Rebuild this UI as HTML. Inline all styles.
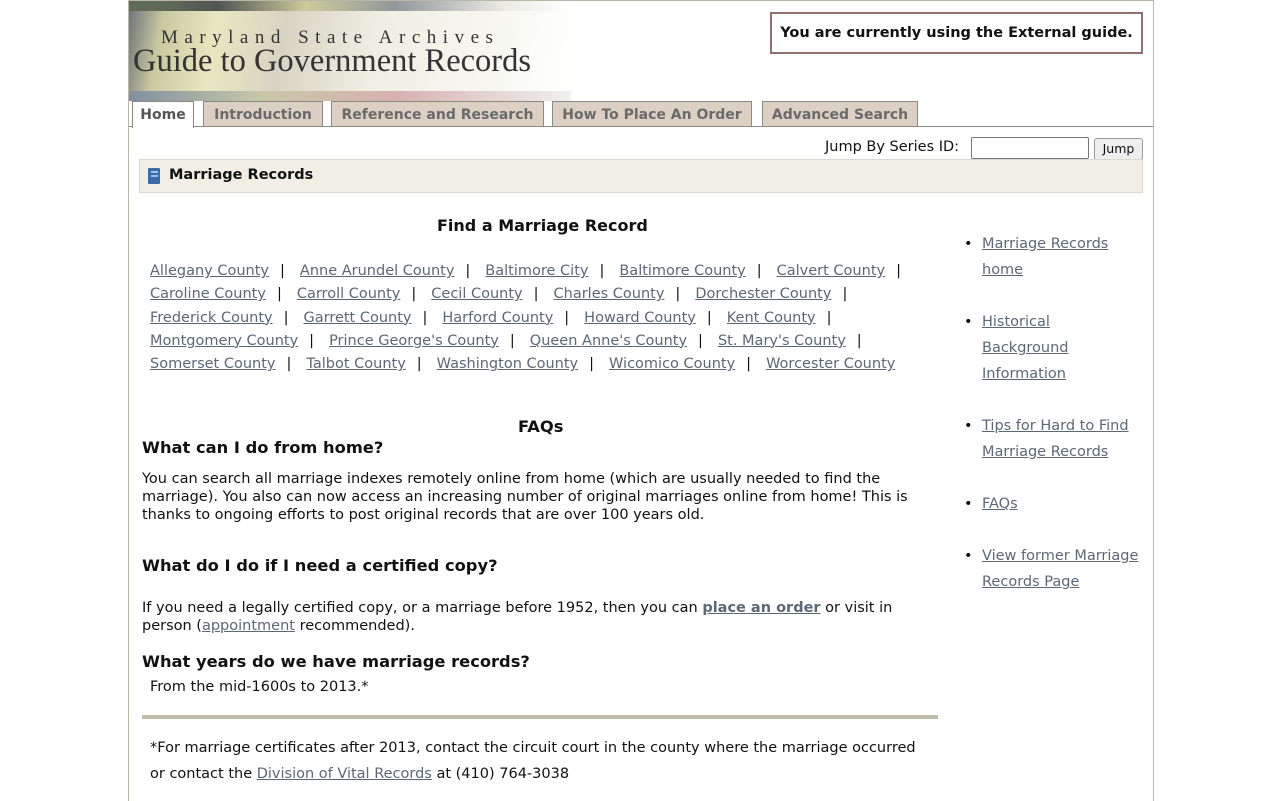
<!DOCTYPE html>
<html><head><meta charset="utf-8"><style>
body{margin:0;background:#fff;font-family:"DejaVu Sans","Liberation Sans",sans-serif;font-size:14.5px;color:#111;}
#page{position:absolute;left:128px;top:0;width:1024px;height:800px;border-left:1px solid #b8b8a8;border-right:1px solid #b8b8a8;border-top:1px solid #b8b8a8;overflow:hidden;}
.abs{position:absolute;white-space:nowrap;}
a{color:#5b6876;text-decoration:underline;}
#hdr{position:absolute;left:0;top:0;width:442px;height:100px;background:linear-gradient(100deg,#6a7078 0%,#c9c9a0 8%,#e9e6c0 20%,#d8d4c4 35%,#efeee2 55%,#f7f7f0 80%,#fff 100%);}
.tab{position:absolute;top:100px;height:24px;background:#dcd0c4;border:1px solid #8c8a80;border-bottom:none;font-weight:bold;color:#6a6a6a;font-size:14px;line-height:27px;text-align:center;}
.p{display:inline-block;margin:0 15px 0 11px}
</style></head><body>
<div id="page">
<div id="hdr">
 <div style="position:absolute;left:0;top:0;width:442px;height:10px;background:linear-gradient(90deg,#5a6a50,#2a3038 20%,#c8c890 40%,#7a8088 60%,#e8e8e0 85%,#fff);opacity:.8"></div>
 <div style="position:absolute;left:0;top:90px;width:442px;height:10px;background:linear-gradient(90deg,#8090a0,#c8c8a8 30%,#d8b0b0 60%,#f0f0f0)"></div>
 <div class="abs" style="left:32px;top:26px;font-family:'Liberation Serif',serif;font-size:19px;letter-spacing:6.5px;color:#333">Maryland State Archives</div>
 <div class="abs" style="left:4px;top:42px;font-family:'Liberation Serif',serif;font-size:32.5px;color:#333">Guide to Government Records</div>
</div>
<div class="abs" style="left:641px;top:11px;width:369px;height:38px;border:2px solid #907070;font-weight:bold;font-size:14.5px;line-height:38px;text-align:center">You are currently using the External guide.</div>
<div class="tab" style="left:3px;width:60px;background:#fff;height:26px;color:#555">Home</div>
<div class="tab" style="left:74px;width:118px">Introduction</div>
<div class="tab" style="left:202px;width:211px">Reference and Research</div>
<div class="tab" style="left:423px;width:198px">How To Place An Order</div>
<div class="tab" style="left:633px;width:154px">Advanced Search</div>
<div style="position:absolute;left:64px;top:125px;width:960px;height:1px;background:#8c8a80"></div>
<div style="position:absolute;left:0;top:125px;width:4px;height:1px;background:#8c8a80"></div>
<div class="abs" style="left:696px;top:138px;">Jump By Series ID:</div>
<div style="position:absolute;left:842px;top:136px;width:116px;height:20px;border:1px solid #777;border-radius:2px"></div>
<div style="position:absolute;left:965px;top:137px;width:47px;height:20px;border:1px solid #999;border-radius:3px;background:#eee;font-size:12.5px;line-height:20px;text-align:center">Jump</div>
<div style="position:absolute;left:10px;top:158px;width:1002px;height:32px;background:#f1eee6;border:1px solid #ddd8cc"></div>
<div style="position:absolute;left:19px;top:167px;width:12px;height:16px;background:#3a6aa8;border-radius:1px"><div style="position:absolute;left:3px;top:3px;width:7px;height:2px;background:#9cc0e8"></div><div style="position:absolute;left:3px;top:7px;width:7px;height:2px;background:#9cc0e8"></div></div>
<div class="abs" style="left:40px;top:166px;font-weight:bold;font-size:14.5px">Marriage Records</div>
<div class="abs" style="left:308px;top:215px;font-weight:bold;font-size:16px">Find a Marriage Record</div>
<div class="abs" style="left:21px;top:259px;line-height:23.3px">
<a>Allegany County</a><span class="p">|</span><a>Anne Arundel County</a><span class="p">|</span><a>Baltimore City</a><span class="p">|</span><a>Baltimore County</a><span class="p">|</span><a>Calvert County</a><span class="p">|</span><br>
<a>Caroline County</a><span class="p">|</span><a>Carroll County</a><span class="p">|</span><a>Cecil County</a><span class="p">|</span><a>Charles County</a><span class="p">|</span><a>Dorchester County</a><span class="p">|</span><br>
<a>Frederick County</a><span class="p">|</span><a>Garrett County</a><span class="p">|</span><a>Harford County</a><span class="p">|</span><a>Howard County</a><span class="p">|</span><a>Kent County</a><span class="p">|</span><br>
<a>Montgomery County</a><span class="p">|</span><a>Prince George's County</a><span class="p">|</span><a>Queen Anne's County</a><span class="p">|</span><a>St. Mary's County</a><span class="p">|</span><br>
<a>Somerset County</a><span class="p">|</span><a>Talbot County</a><span class="p">|</span><a>Washington County</a><span class="p">|</span><a>Wicomico County</a><span class="p">|</span><a>Worcester County</a>
</div>
<div class="abs" style="left:389px;top:416px;font-weight:bold;font-size:16.3px">FAQs</div>
<div class="abs" style="left:13px;top:437px;font-weight:bold;font-size:16.3px">What can I do from home?</div>
<div class="abs" style="left:13px;top:469px;line-height:18px">You can search all marriage indexes remotely online from home (which are usually needed to find the<br>marriage). You also can now access an increasing number of original marriages online from home! This is<br>thanks to ongoing efforts to post original records that are over 100 years old.</div>
<div class="abs" style="left:13px;top:555px;font-weight:bold;font-size:16.3px">What do I do if I need a certified copy?</div>
<div class="abs" style="left:13px;top:598px;line-height:18px">If you need a legally certified copy, or a marriage before 1952, then you can <a style="font-weight:bold">place an order</a> or visit in<br>person (<a>appointment</a> recommended).</div>
<div class="abs" style="left:13px;top:651px;font-weight:bold;font-size:16.3px">What years do we have marriage records?</div>
<div class="abs" style="left:21px;top:678px">From the mid-1600s to 2013.*</div>
<div style="position:absolute;left:13px;top:714px;width:796px;height:4px;background:#c0bcac"></div>
<div class="abs" style="left:21px;top:734px;line-height:26px">*For marriage certificates after 2013, contact the circuit court in the county where the marriage occurred<br>or contact the <a>Division of Vital Records</a> at (410) 764-3038</div>
<div class="abs" style="left:853px;top:230px;line-height:26px">
<div style="position:relative"><span style="position:absolute;left:-18px;top:0">•</span><a>Marriage Records</a><br><a>home</a></div>
<div style="position:relative;margin-top:26px"><span style="position:absolute;left:-18px;top:0">•</span><a>Historical</a><br><a>Background</a><br><a>Information</a></div>
<div style="position:relative;margin-top:26px"><span style="position:absolute;left:-18px;top:0">•</span><a>Tips for Hard to Find</a><br><a>Marriage Records</a></div>
<div style="position:relative;margin-top:26px"><span style="position:absolute;left:-18px;top:0">•</span><a>FAQs</a></div>
<div style="position:relative;margin-top:26px"><span style="position:absolute;left:-18px;top:0">•</span><a>View former Marriage</a><br><a>Records Page</a></div>
</div>
</div>
</body></html>
